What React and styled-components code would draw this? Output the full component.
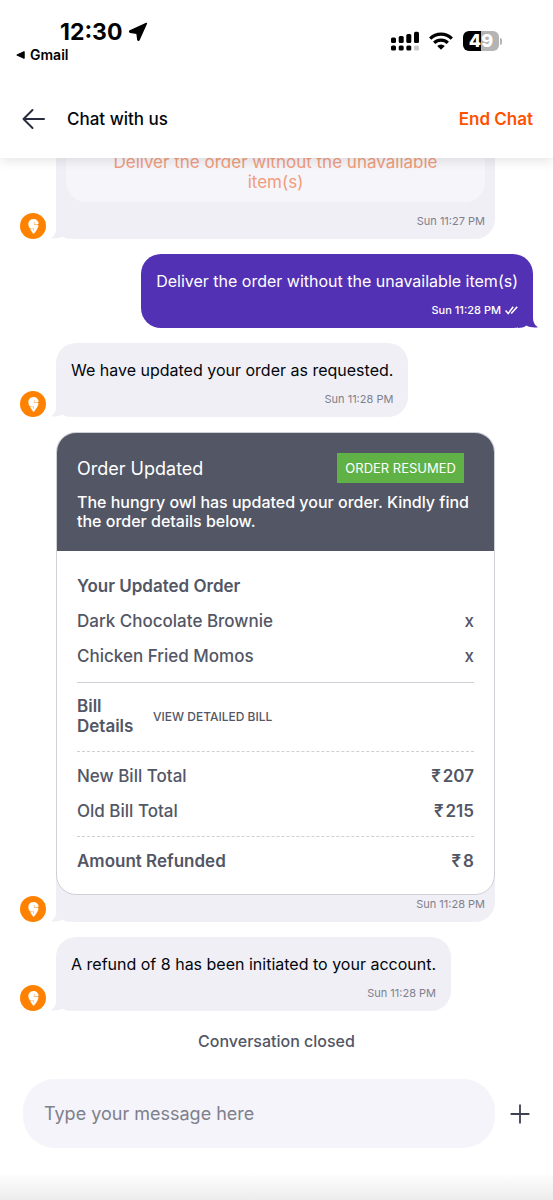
import React, { useState } from 'react'

import styled, { createGlobalStyle } from 'styled-components'
import { SiSwiggy } from 'react-icons/si'

const items = ['Dark Chocolate Brownie', 'Chicken Fried Momos']

const App = () => {
    const [draft, setDraft] = useState('')

    return (
        <Screen>
            <GlobalStyle />
            <Top>
                <StatusBar />
                <NavBar>
                    <IconButton type="button" aria-label="Back">
                        <BackIcon />
                    </IconButton>
                    <NavTitle>Chat with us</NavTitle>
                    <EndChat type="button">End Chat</EndChat>
                </NavBar>
            </Top>

            <Scroller>
                <Messages>
                    <BotMessage time="Sun 11:27 PM" wide>
                        <Option type="button">Deliver the order without the unavailable item(s)</Option>
                    </BotMessage>

                    <Row $mine>
                        <Bubble $mine>
                            <Text>Deliver the order without the unavailable item(s)</Text>
                            <Time $mine>
                                Sun 11:28 PM
                                <ReadIcon />
                            </Time>
                            <Tail $mine />
                        </Bubble>
                    </Row>

                    <BotMessage time="Sun 11:28 PM">
                        <Text>We have updated your order as requested.</Text>
                    </BotMessage>

                    <BotMessage time="Sun 11:28 PM" wide flush>
                        <OrderCard />
                    </BotMessage>

                    <BotMessage time="Sun 11:28 PM">
                        <Text>A refund of 8 has been initiated to your account.</Text>
                    </BotMessage>

                    <Closed>Conversation closed</Closed>
                </Messages>
            </Scroller>

            <Composer onSubmit={(e) => e.preventDefault()}>
                <MessageInput
                    type="text"
                    aria-label="Message"
                    placeholder="Type your message here"
                    value={draft}
                    onChange={(e) => setDraft(e.target.value)}
                />
                <IconButton type="button" aria-label="Add attachment">
                    <PlusIcon />
                </IconButton>
            </Composer>
        </Screen>
    )
}

const StatusBar = () => (
    <StatusWrap>
        <div>
            <Clock>
                12:30
                <svg width="20" height="20" viewBox="0 0 20 20" aria-hidden="true">
                    <path d="M18.400 1.400 11 17.900c-.3.6-1.100.5-1.200-.2L9 11.400 2.200 10.200c-.7-.1-.8-1-.2-1.300Z" fill="#000" stroke="#000" strokeWidth="1.400" strokeLinejoin="round" />
                </svg>
            </Clock>
            <BackToApp href="#gmail">
                <svg width="9" height="8" viewBox="0 0 9 8" aria-hidden="true">
                    <path d="M0.800 4 8.200.6v6.800Z" fill="#000" stroke="#000" strokeLinejoin="round" />
                </svg>
                Gmail
            </BackToApp>
        </div>
        <StatusIcons>
            <svg width="28" height="20" viewBox="0 0 28 20" aria-hidden="true">
                <rect x="0" y="6.500" width="5" height="5.500" rx="1.500" />
                <rect x="7.700" y="5" width="5" height="7" rx="1.500" />
                <rect x="15.300" y="3" width="5" height="9" rx="1.500" />
                <rect x="23" y="0.800" width="5" height="11.200" rx="1.500" />
                <rect x="0" y="14.500" width="5" height="5" rx="1.500" />
                <rect x="7.700" y="14.500" width="5" height="5" rx="1.500" />
                <rect x="15.300" y="14.500" width="5" height="5" rx="1.500" />
                <rect x="23" y="14.500" width="5" height="5" rx="1.500" fill="#c8c8c8" />
            </svg>
            <svg width="24" height="18" viewBox="0 0 24 18" fill="none" stroke="#000" strokeWidth="3.300" aria-hidden="true">
                <path d="M1.200 6.600a15.300 15.300 0 0 1 21.600 0" />
                <path d="M5.200 10.900a9.700 9.700 0 0 1 13.600 0" />
                <path d="M12 17.800 8.200 14a5.400 5.400 0 0 1 7.600 0Z" fill="#000" stroke="none" />
            </svg>
            <Battery>
                <BatteryBody>49</BatteryBody>
                <BatteryCap />
            </Battery>
        </StatusIcons>
    </StatusWrap>
)

const BotMessage = ({ time, wide, flush, children }) => (
    <Row>
        <Avatar>
            <SiSwiggy size={15} />
        </Avatar>
        <Bubble $wide={wide} $flush={flush}>
            {children}
            <Time $inset={flush}>{time}</Time>
            <Tail />
        </Bubble>
    </Row>
)

const OrderCard = () => (
    <Card>
        <CardHead>
            <CardHeadRow>
                <CardTitle>Order Updated</CardTitle>
                <Badge>ORDER RESUMED</Badge>
            </CardHeadRow>
            <CardText>The hungry owl has updated your order. Kindly find the order details below.</CardText>
        </CardHead>
        <CardBody>
            <Section $first>
                <Line><b>Your Updated Order</b></Line>
                {items.map((item) => (
                    <Line key={item}>
                        <span>{item}</span>
                        <span>x</span>
                    </Line>
                ))}
            </Section>
            <BillSection>
                <BillLabel>Bill Details</BillLabel>
                <BillLink type="button">VIEW DETAILED BILL</BillLink>
            </BillSection>
            <Section $dashed>
                <Line>
                    <span>New Bill Total</span>
                    <Price>₹<span>207</span></Price>
                </Line>
                <Line>
                    <span>Old Bill Total</span>
                    <Price>₹<span>215</span></Price>
                </Line>
            </Section>
            <Section $dashed>
                <Line>
                    <b>Amount Refunded</b>
                    <Price>₹<span>8</span></Price>
                </Line>
            </Section>
        </CardBody>
    </Card>
)

const BackIcon = () => (
    <svg width="24" height="24" viewBox="0 0 24 24" fill="none" stroke="#282c3f" strokeWidth="2" strokeLinecap="round" strokeLinejoin="round">
        <path d="M22 12H1.500M10.500 3 1.500 12l9 9" />
    </svg>
)

const PlusIcon = () => (
    <svg width="20" height="20" viewBox="0 0 20 20" stroke="#3d4152" strokeWidth="1.800">
        <path d="M10 .6v18.800M.6 10h18.800" />
    </svg>
)

const ReadIcon = () => (
    <svg width="13" height="9" viewBox="0 0 13 9" fill="none" stroke="#fff" strokeWidth="1.500" aria-hidden="true">
        <path d="M.6 4.600 3.200 7.600 8.200.8M6.200 7.600l6-6.800" />
    </svg>
)

const Tail = ({ $mine }) => (
    <TailWrap $mine={$mine} width="20" height="24" viewBox="0 0 20 24" aria-hidden="true">
        <path d="M5 0v14c0 4-1.500 7-5 9.200 4 .6 8.500.2 11.500-1.700 2.500 1.800 5.500 2.500 8.500 2.500V0Z" fill="currentColor" />
    </TailWrap>
)

const GlobalStyle = createGlobalStyle`
    * {
        box-sizing: border-box;
    }
    body {
        margin: 0;
        background: #fff;
        color: #02060c;
        font-family: Inter, "Liberation Sans", sans-serif;
    }
    button {
        padding: 0;
        border: none;
        background: none;
        font-family: inherit;
    }
`

const Screen = styled.div`
    display: flex;
    flex-direction: column;
    height: 100vh;
`

const Top = styled.header`
    position: relative;
    z-index: 2;
    flex: none;
    background: #fff;
    box-shadow: 0 2px 12px rgba(0, 0, 0, 0.12);
`

const StatusWrap = styled.div`
    display: flex;
    justify-content: space-between;
    padding: 18px 51px 16px 16px;
`

const Clock = styled.div`
    display: flex;
    align-items: center;
    gap: 6px;
    padding-left: 44px;
    font-size: 23px;
    line-height: 28px;
    font-weight: 700;
    color: #000;
`

const BackToApp = styled.a`
    display: flex;
    align-items: center;
    gap: 5px;
    font-size: 14px;
    line-height: 18px;
    font-weight: 600;
    color: #000;
    text-decoration: none;
`

const StatusIcons = styled.div`
    display: flex;
    align-items: center;
    gap: 10px;
    height: 46px;
`

const Battery = styled.div`
    display: flex;
    align-items: center;
    gap: 1px;
`

const BatteryBody = styled.div`
    width: 36px;
    border-radius: 6px;
    background: linear-gradient(90deg, #000 50%, #b4b4b4 50%);
    color: #fff;
    font-size: 18px;
    line-height: 20px;
    font-weight: 800;
    text-align: center;
`

const BatteryCap = styled.div`
    width: 2px;
    height: 7px;
    border-radius: 0 2px 2px 0;
    background: #b4b4b4;
`

const NavBar = styled.div`
    display: flex;
    align-items: center;
    height: 78px;
    padding: 0 20px 0 22px;
`

const IconButton = styled.button`
    display: flex;
    align-items: center;
    justify-content: center;
    width: 24px;
    height: 24px;
`

const NavTitle = styled.h1`
    flex: 1;
    margin: 0 0 0 21px;
    font-size: 17px;
    font-weight: 500;
`

const EndChat = styled.button`
    color: #ff5200;
    font-size: 17px;
    font-weight: 600;
`

/* column-reverse keeps the newest message in view */
const Scroller = styled.main`
    display: flex;
    flex-direction: column-reverse;
    flex: 1;
    min-height: 0;
    overflow-y: auto;
    scrollbar-width: none;
`

const Messages = styled.div`
    display: flex;
    flex-direction: column;
    flex: none;
    gap: 15px;
    padding-bottom: 27px;
`

const Row = styled.div`
    display: flex;
    align-items: flex-end;
    justify-content: ${props => props.$mine ? 'flex-end' : 'flex-start'};
    gap: 10px;
    padding: ${props => props.$mine ? '0 20px 0 58px' : '0 58px 0 20px'};
`

const Avatar = styled.div`
    display: flex;
    align-items: center;
    justify-content: center;
    flex: none;
    width: 26px;
    height: 26px;
    border-radius: 50%;
    background: #ff8100;
    color: #fff;
    path {
        stroke: currentColor;
        stroke-width: 0.4;
    }
`

const Bubble = styled.div`
    position: relative;
    flex: ${props => props.$wide ? '1' : '0 1 auto'};
    padding: ${props => props.$flush ? '0 0 9px' : props.$wide ? '10px 10px 9px' : '15px 15px 9px'};
    border-radius: 20px;
    background: ${props => props.$mine ? '#5231b4' : '#f0eff5'};
    color: ${props => props.$mine ? '#fff' : '#02060c'};
`

const TailWrap = styled.svg`
    position: absolute;
    bottom: 0;
    color: ${props => props.$mine ? '#5231b4' : '#f0eff5'};
    ${props => props.$mine ? 'right: -5px; transform: scaleX(-1);' : 'left: -5px;'}
`

const Text = styled.p`
    margin: 0 0 8px;
    font-size: 16px;
    line-height: 24px;
`

const Time = styled.div`
    position: relative;
    z-index: 1;
    display: flex;
    align-items: center;
    justify-content: flex-end;
    gap: 4px;
    padding-right: ${props => props.$inset ? '10px' : '0'};
    color: ${props => props.$mine ? '#fff' : '#7e808c'};
    font-size: 11px;
    line-height: 18px;
    font-weight: ${props => props.$mine ? 500 : 400};
`

const Option = styled.button`
    display: block;
    width: 100%;
    margin-bottom: 10px;
    padding: 10px 40px;
    border-radius: 20px;
    background: #f5f5fa;
    color: #f19c7c;
    font-size: 17px;
    line-height: 20px;
`

const Card = styled.section`
    position: relative;
    z-index: 1;
    overflow: hidden;
    border: 1px solid #cfd0d6;
    border-radius: 20px;
    background: #fff;
    color: #535665;
`

const CardHead = styled.div`
    padding: 20px;
    background: #535665;
    color: #fff;
`

const CardHeadRow = styled.div`
    display: flex;
    align-items: center;
    justify-content: space-between;
    margin-bottom: 10px;
    padding-right: 10px;
`

const CardTitle = styled.h2`
    margin: 0;
    font-size: 18px;
    font-weight: 400;
`

const Badge = styled.span`
    padding: 0 8px;
    background: #60b246;
    font-size: 13px;
    line-height: 30px;
`

const CardText = styled.p`
    margin: 0;
    font-size: 16px;
    line-height: 19px;
    font-weight: 500;
`

const CardBody = styled.div`
    padding: 18px 20px 8px;
    font-size: 17px;
    font-weight: 500;
`

const Section = styled.div`
    padding: ${props => props.$first ? '0 0 8px' : '7px 0'};
    border-top: ${props => props.$dashed ? '1px dashed #cfd0d6' : 'none'};
    b {
        font-weight: 600;
    }
`

const Line = styled.div`
    display: flex;
    justify-content: space-between;
    line-height: 35px;
`

const Price = styled.b`
    display: flex;
    gap: 2px;
`

const BillSection = styled.div`
    display: flex;
    align-items: center;
    gap: 8px;
    padding: 13px 0 15px;
    border-top: 1px solid #cfd0d6;
`

const BillLabel = styled.b`
    width: 68px;
    line-height: 20px;
    font-weight: 600;
`

const BillLink = styled.button`
    color: #535665;
    font-size: 12px;
    font-weight: 500;
`

const Closed = styled.p`
    margin: 4px 0 0;
    color: #535665;
    font-size: 16px;
    line-height: 22px;
    font-weight: 500;
    text-align: center;
`

const Composer = styled.form`
    display: flex;
    align-items: center;
    flex: none;
    gap: 13px;
    padding: 0 21px 52px 23px;
    background: linear-gradient(0deg, #ececec, #fff 28px);
`

const MessageInput = styled.input`
    flex: 1;
    min-width: 0;
    height: 69px;
    padding: 0 21px;
    border: none;
    border-radius: 32px;
    outline: none;
    background: #f4f4fa;
    color: #02060c;
    font-family: inherit;
    font-size: 18px;
    &::placeholder {
        color: #7e808c;
        opacity: 1;
    }
`

export default App
